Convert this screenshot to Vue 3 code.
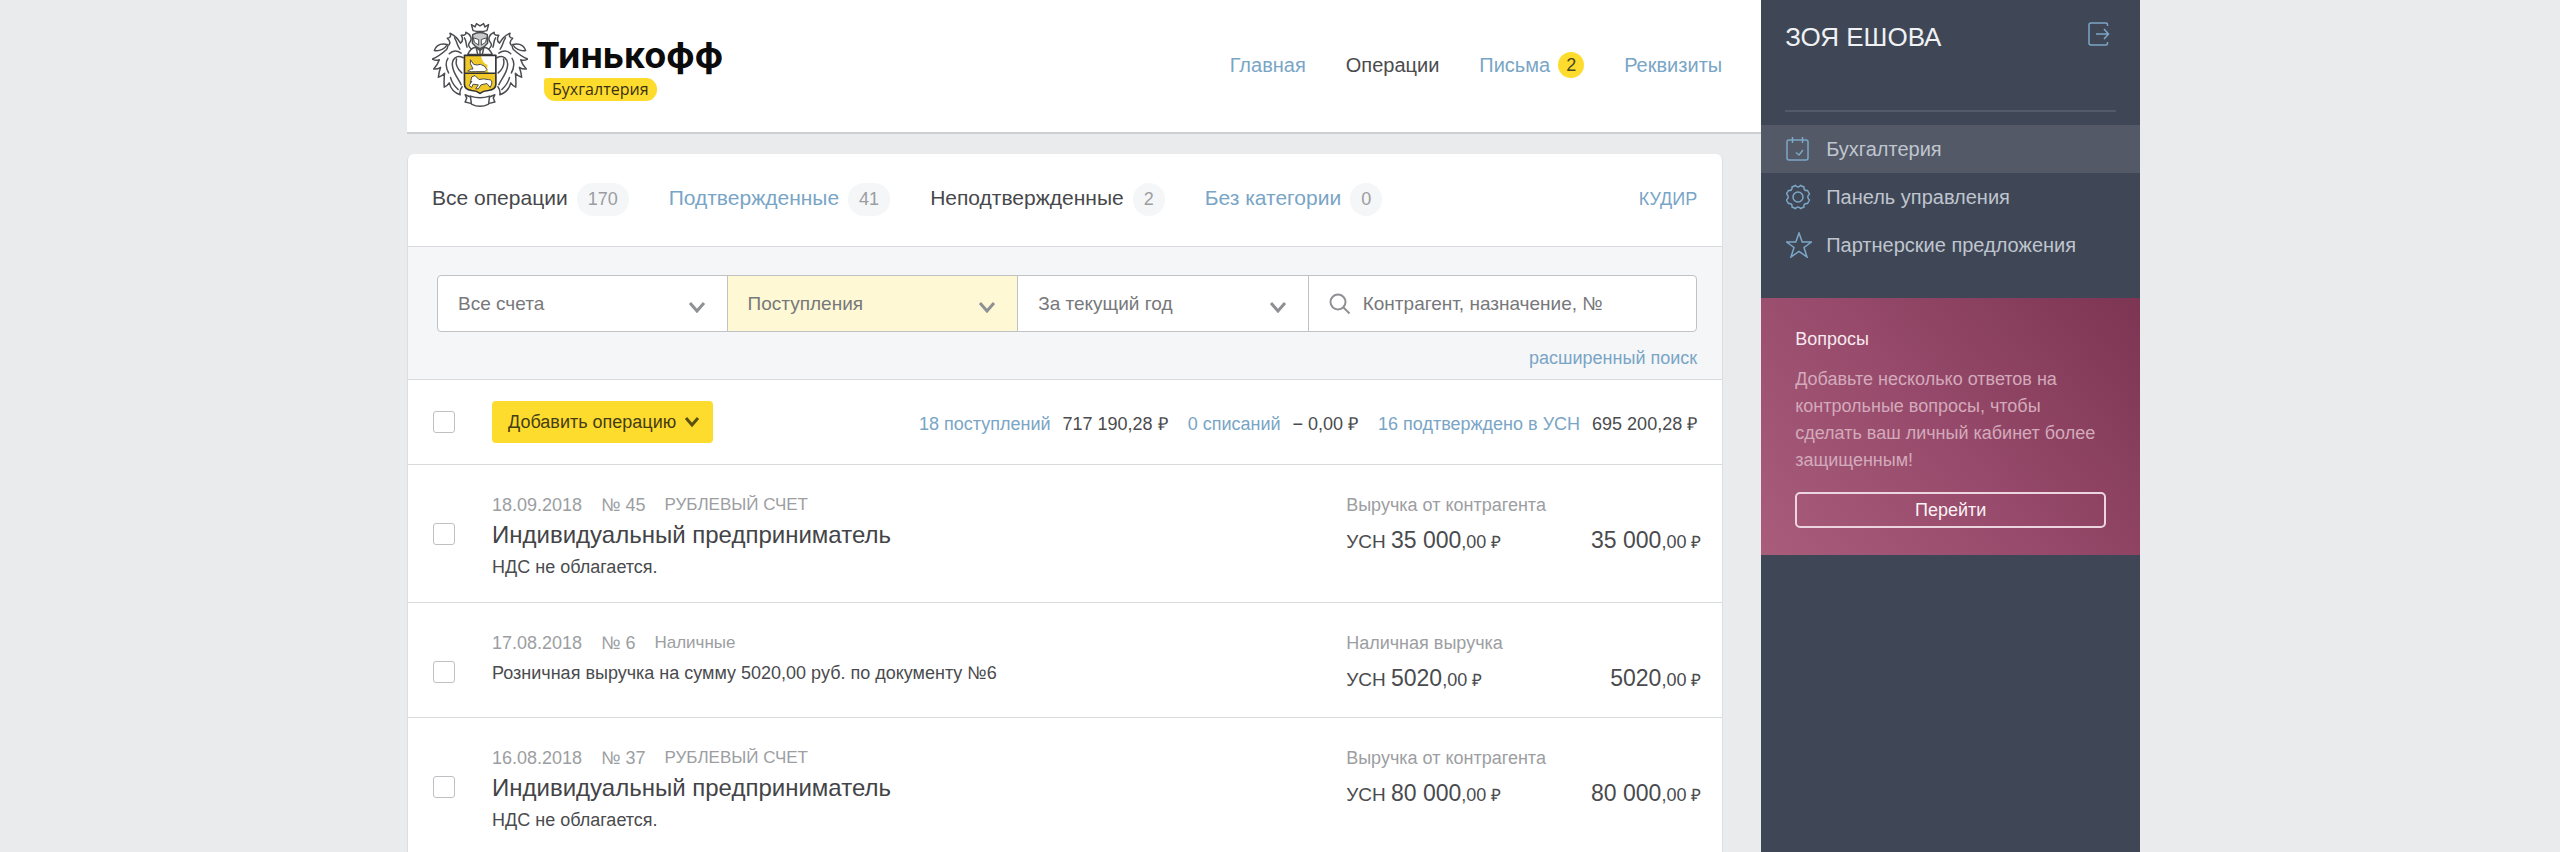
<script setup>
import { ref } from 'vue'

const nav = [
  { title: 'Главная' },
  { title: 'Операции', current: true },
  { title: 'Письма', count: 2 },
  { title: 'Реквизиты' }
]

const tabs = [
  { title: 'Все операции', count: 170, dark: true },
  { title: 'Подтвержденные', count: 41 },
  { title: 'Неподтвержденные', count: 2, dark: true },
  { title: 'Без категории', count: 0 }
]

const filters = [
  { id: 'account', label: 'Счет', value: 'Все счета' },
  { id: 'kind', label: 'Тип операции', value: 'Поступления', marked: true },
  { id: 'period', label: 'Период', value: 'За текущий год' }
]

const totals = [
  { title: '18 поступлений', sum: '717 190,28 ₽' },
  { title: '0 списаний', sum: '− 0,00 ₽' },
  { title: '16 подтверждено в УСН', sum: '695 200,28 ₽' }
]

const operations = ref([
  { date: '18.09.2018', number: '№ 45', account: 'РУБЛЕВЫЙ СЧЕТ', title: 'Индивидуальный предприниматель', note: 'НДС не облагается.', category: 'Выручка от контрагента', sum: '35 000', checked: false },
  { date: '17.08.2018', number: '№ 6', account: 'Наличные', title: '', note: 'Розничная выручка на сумму 5020,00 руб. по документу №6', category: 'Наличная выручка', sum: '5020', checked: false },
  { date: '16.08.2018', number: '№ 37', account: 'РУБЛЕВЫЙ СЧЕТ', title: 'Индивидуальный предприниматель', note: 'НДС не облагается.', category: 'Выручка от контрагента', sum: '80 000', checked: false }
])

const allChecked = ref(false)
const query = ref('')
</script>

<template>
  <div class="page">
    <div class="workspace">
      <header class="header">
        <a class="brand" href="#">
          <svg class="crest" viewBox="36 36 290 260" fill="none" stroke="#4c4d51" stroke-width="4.5" stroke-linejoin="round" stroke-linecap="round" aria-hidden="true">
            <g id="mantle">
              <path d="M158 120C146 112 144 104 150 97C158 88 154 74 138 67C140 75 132 77 124 76C130 86 130 94 122 100C114 86 104 76 90 70C95 80 90 84 82 85C90 92 92 98 88 104C80 106 86 112 80 119C68 130 56 140 37 148C44 152 52 153 58 150C54 162 48 171 41 178C49 179 56 177 62 173C58 184 56 194 55 203C63 201 69 197 74 191C72 206 72 220 73 233C80 230 84 226 88 220C92 236 102 250 121 256C119 246 122 238 127 232" />
              <path d="M43 122C48 108 62 100 82 104C76 116 60 125 43 122Z" />
              <path d="M130 144C110 134 94 148 98 170C101 194 116 206 124 226M88 132C98 122 112 122 124 130M104 84C112 96 112 108 120 118M134 84C140 92 138 102 142 112M84 146C76 158 78 174 86 190M92 204C96 220 104 230 115 240M110 148C106 164 112 178 126 190" />
            </g>
            <use href="#mantle" transform="matrix(-1 0 0 1 362 0)" />
            <path fill="#fff" d="M160 62L155 44L166 51L170 41L181 48L192 41L196 51L207 44L202 62Q181 68 160 62Z" />
            <path fill="#c9cacc" d="M159 74Q181 62 203 74L204 100Q196 112 181 117Q166 112 158 100Z" />
            <path fill="#fff" stroke-width="3" d="M162 84L177 89V106L165 98ZM200 84L185 89V106L197 98Z" />
            <path fill="#fff" d="M144 134Q154 112 168 113L181 122L194 113Q208 112 218 134Z" />
            <path d="M170 116L174 134M192 116L188 134M181 122V134" />
            <path fill="#f0c928" stroke="none" d="M134 137H229V224Q229 240 206 243Q190 244 181 252Q172 244 156 243Q134 240 134 224Z" />
            <path fill="#fff" stroke="none" d="M184 138H229V190H208Q200 180 204 166Q188 160 184 138Z" />
            <path fill="#fff" stroke-width="3" d="M145 184Q150 176 160 178L152 162V150L162 164Q172 168 182 164Q196 166 202 180L196 186H168Q156 188 145 184Z" />
            <path fill="#fff" stroke-width="3" d="M152 218L156 202L166 198L178 210Q192 206 206 210Q220 210 216 224L212 234L202 222L184 226L176 238L168 238L176 226L160 224L156 234L148 228L156 216Z" />
            <path stroke="#333" stroke-width="5" d="M134 137H229V224Q229 240 206 243Q190 244 181 252Q172 244 156 243Q134 240 134 224ZM134 191H229" />
            <path fill="#fff" d="M152 260Q181 270 210 260L207 284Q181 298 155 284ZM151 262L136 256L141 266L136 278L153 282M211 262L226 256L221 266L226 278L209 282" />
          </svg>
          <span class="brand-text">
            <span class="brand-name">Тинькофф</span>
            <span class="brand-product">Бухгалтерия</span>
          </span>
        </a>
        <nav class="nav" aria-label="Разделы">
          <a v-for="item in nav" :key="item.title" href="#" :class="{ current: item.current }">
            {{ item.title }}<span v-if="item.count" class="nav-count">{{ item.count }}</span>
          </a>
        </nav>
      </header>

      <main class="card">
        <div class="tabs">
          <a v-for="tab in tabs" :key="tab.title" href="#" class="tab" :class="{ dark: tab.dark }">
            <span class="tab-title">{{ tab.title }}</span><span class="tab-count">{{ tab.count }}</span>
          </a>
          <a href="#" class="ledger">КУДИР</a>
        </div>

        <form class="filters" @submit.prevent>
          <div class="fields">
            <div v-for="filter in filters" :key="filter.id" class="field" :class="{ marked: filter.marked }">
              <select :id="filter.id" :aria-label="filter.label">
                <option>{{ filter.value }}</option>
              </select>
              <svg class="chevron" viewBox="0 0 18 12" aria-hidden="true"><path d="M2 2L9 10L16 2" /></svg>
            </div>
            <label class="field search">
              <svg viewBox="0 0 22 22" aria-hidden="true"><circle cx="9" cy="9" r="7.5" /><path d="M14.5 14.5L20.5 20.5" /></svg>
              <input v-model="query" type="text" placeholder="Контрагент, назначение, №" aria-label="Поиск" />
            </label>
          </div>
          <a href="#" class="advanced">расширенный поиск</a>
        </form>

        <div class="toolbar">
          <input v-model="allChecked" type="checkbox" class="check" aria-label="Выбрать все операции" />
          <button type="button" class="add">
            Добавить операцию
            <svg viewBox="0 0 16 10" aria-hidden="true"><path d="M2 1L8 8L14 1" /></svg>
          </button>
          <div class="totals">
            <span v-for="total in totals" :key="total.title" class="total">
              <a href="#">{{ total.title }}</a><span>{{ total.sum }}</span>
            </span>
          </div>
        </div>

        <article v-for="op in operations" :key="op.date" class="operation">
          <input v-model="op.checked" type="checkbox" class="check" :aria-label="'Выбрать операцию ' + op.number" />
          <div class="summary">
            <div class="meta"><span>{{ op.date }}</span><span>{{ op.number }}</span><span class="account">{{ op.account }}</span></div>
            <h2 v-if="op.title">{{ op.title }}</h2>
            <p class="note" :class="{ lone: !op.title }">{{ op.note }}</p>
          </div>
          <div class="figures">
            <div class="category">{{ op.category }}</div>
            <div class="amounts">
              <span><span class="tax">УСН </span>{{ op.sum }}<span class="cents">,00</span><span class="ruble"> ₽</span></span>
              <span>{{ op.sum }}<span class="cents">,00</span><span class="ruble"> ₽</span></span>
            </div>
          </div>
        </article>
      </main>
    </div>

    <aside class="sidebar">
      <div class="user">
        <span>ЗОЯ ЕШОВА</span>
        <button type="button" class="logout" aria-label="Выйти">
          <svg viewBox="0 0 22 24" aria-hidden="true"><path d="M19.500 4V2.500Q19.500 1 18 1H3Q1 1 1 3V21Q1 23 3 23H18Q19.500 23 19.500 21.500V20M8 12H20.500M16 7L20.500 12L16 17" /></svg>
        </button>
      </div>
      <nav class="menu" aria-label="Продукты">
        <a href="#" class="active">
          <svg viewBox="0 0 26 26" aria-hidden="true"><rect x="1" y="4" width="21" height="20" rx="2" /><path d="M6.500 1V7M16.500 1V7M10 16.500L13 19L17 14" /></svg>
          Бухгалтерия
        </a>
        <a href="#">
          <svg viewBox="0 0 26 26" aria-hidden="true"><circle cx="12" cy="13" r="5" /><path d="M9.500 1.500Q12 4.500 14.500 1.500L18 3Q17.500 7 21.500 6.500L23.500 10Q20 13 23.500 16L21.500 19.500Q17.500 19 18 23L14.500 24.500Q12 21.500 9.500 24.500L6 23Q6.500 19 2.500 19.500L.5 16Q4 13 .5 10L2.500 6.500Q6.500 7 6 3Z" /></svg>
          Панель управления
        </a>
        <a href="#">
          <svg viewBox="0 0 26 26" aria-hidden="true"><path d="M13 1L16.200 10H25.500L18 15.500L21 25L13 19.300L5 25L8 15.500L.5 10H9.800Z" /></svg>
          Партнерские предложения
        </a>
      </nav>
      <section class="promo">
        <h3>Вопросы</h3>
        <p>Добавьте несколько ответов на контрольные вопросы, чтобы сделать ваш личный кабинет более защищенным!</p>
        <button type="button">Перейти</button>
      </section>
    </aside>
  </div>
</template>

<style>
body {
  margin: 0;
  background: #eaebed;
}
</style>

<style scoped>
.page {
  display: grid;
  grid-template-columns: minmax(0, 1fr) 379px;
  min-height: 100vh;
  padding-left: 15.9%;
  padding-right: 16.4%;
  box-sizing: border-box;
  font-family: "Liberation Sans", Arial, sans-serif;
  font-size: 18px;
  line-height: 24px;
  color: #4a4b4e;
  background: #eaebed;
}
.page * { box-sizing: border-box; }
a { color: #79a5c6; text-decoration: none; }
button, input, select { font: inherit; color: inherit; }
button { cursor: pointer; }
h2, h3, p { margin: 0; font-weight: 400; }

.workspace { display: flex; flex-direction: column; }

.header {
  display: flex;
  justify-content: space-between;
  align-items: center;
  height: 134px;
  padding: 0 39px 2px 25px;
  background: #fff;
  border-bottom: 2px solid #cdced1;
}
.brand { display: flex; align-items: center; gap: 8px; color: #0b0b0c; }
.crest { width: 96px; height: 86px; }
.brand-text { display: flex; flex-direction: column; align-items: flex-start; padding-top: 3px; }
.brand-name { font: 700 36px/46px Inter, sans-serif; }
.brand-product {
  margin-left: 8px;
  padding: 0 8px;
  border-radius: 3px 11px 11px 11px;
  background: #fedc2e;
  font: 16px/23px "Open Sans", sans-serif;
  color: #3a3010;
}
.nav { display: flex; gap: 40px; font-size: 20px; }
.nav a { display: flex; align-items: center; gap: 8px; }
.nav .current { color: #4a4b4e; }
.nav-count {
  width: 26px;
  border-radius: 13px;
  background: #fedc2e;
  font-size: 18px;
  line-height: 26px;
  text-align: center;
  color: #4a4520;
}

.card {
  flex: 1;
  margin: 20px 38px 0 0;
  background: #fff;
  border: 1px solid #dcdee1;
  border-width: 0 1px;
  border-radius: 6px 6px 0 0;
}
.tabs {
  display: flex;
  align-items: center;
  gap: 40px;
  height: 93px;
  padding: 0 25px 2px 24px;
  border-bottom: 1px solid #d8dade;
  font-size: 21px;
}
.tab { display: flex; align-items: center; gap: 9px; }
.tab-title { padding-bottom: 2px; }
.tab.dark { color: #47484b; }
.tab-count {
  padding: 0 11px;
  border-radius: 16px;
  background: #f5f6f8;
  font-size: 18px;
  line-height: 33px;
  color: #9b9da1;
}
.ledger { margin-left: auto; font-size: 18px; }

.filters {
  padding: 28px 25px 9px 29px;
  background: #f5f6f8;
  border-bottom: 1px solid #d8dade;
}
.fields {
  display: grid;
  grid-template-columns: 290fr 291fr 291fr 388fr;
  height: 57px;
  border: 1px solid #c0c2c6;
  border-radius: 4px;
  background: #fff;
  overflow: hidden;
  font-size: 19px;
  color: #77787b;
}
.field { display: grid; align-items: center; border-right: 1px solid #c0c2c6; }
.field select, .chevron { grid-area: 1 / 1; }
.field select {
  width: 100%;
  height: 100%;
  padding: 0 50px 0 20px;
  border: 0;
  appearance: none;
  background: transparent;
}
.marked { background: #fef8d5; }
.chevron { width: 18px; height: 12px; margin: 6px 21px 0; justify-self: end; pointer-events: none; }
.chevron path { fill: none; stroke: #8f9094; stroke-width: 3; }
.search { grid-template-columns: 22px 1fr; gap: 12px; padding: 0 20px; border-right: 0; }
.search svg { width: 22px; height: 22px; fill: none; stroke: #8f9094; stroke-width: 2; }
.search input { width: 100%; padding: 0; border: 0; outline: 0; background: none; }
.search input::placeholder { color: #77787b; opacity: 1; }
.advanced { display: block; margin-top: 14px; text-align: right; }

.toolbar {
  display: flex;
  align-items: center;
  height: 85px;
  padding: 0 25px;
  border-bottom: 1px solid #d8dade;
}
.check {
  flex: none;
  width: 22px;
  height: 22px;
  margin: 0 37px 0 0;
  appearance: none;
  background: #fff;
  border: 1px solid #bfc0c4;
  border-radius: 3px;
}
.check:checked { background: #fedc2e; }
.add {
  display: flex;
  align-items: center;
  gap: 8px;
  height: 42px;
  padding: 0 13px 0 16px;
  border: 0;
  border-radius: 4px;
  background: #fedc2e;
  color: #453d14;
}
.add svg { width: 16px; height: 10px; fill: none; stroke: #5c5113; stroke-width: 3; }
.totals { display: flex; gap: 20px; margin-left: auto; padding-top: 4px; }
.total { display: flex; gap: 12px; }

.operation {
  display: flex;
  align-items: flex-start;
  padding: 28px 21px 16px 25px;
  border-bottom: 1px solid #d8dade;
}
.operation:last-child { padding-bottom: 8px; border-bottom: 0; }
.operation .check { margin-top: 30px; }
.summary { flex: 1; padding-bottom: 5px; }
.meta { display: flex; gap: 19px; color: #9c9ea2; }
.account { font-size: 17px; }
.summary h2 { font-size: 24px; line-height: 36px; color: #434447; }
.note { line-height: 28px; }
.lone { padding-top: 4px; }
.figures { width: 355px; }
.category { color: #9c9ea2; }
.amounts { display: flex; justify-content: space-between; font-size: 23px; line-height: 46px; }
.amounts span span { line-height: 1; }
.tax { font-size: 19px; }
.cents { font-size: 18px; }
.ruble { font-size: 17px; }

.sidebar { background: #3f4756; }
.user {
  display: flex;
  justify-content: space-between;
  height: 112px;
  margin: 0 24px;
  padding-top: 22px;
  border-bottom: 2px solid #535b69;
  font-size: 26px;
  line-height: 30px;
  color: #eff1f5;
}
.logout { width: 22px; height: 24px; margin-right: 6px; padding: 0; border: 0; background: none; }
.logout svg, .menu svg { display: block; fill: none; stroke: #7da7c7; stroke-width: 1.5; }
.logout svg { width: 22px; height: 24px; }
.menu { margin-top: 13px; }
.menu a {
  display: flex;
  align-items: center;
  gap: 14px;
  height: 48px;
  padding-left: 25px;
  font-size: 20px;
  color: #bfc5cf;
}
.menu .active { background: #535966; }
.menu svg { width: 26px; height: 26px; }
.promo {
  margin-top: 29px;
  padding: 28px 34px 27px;
  background: linear-gradient(50deg, #a95d7b, #96496a 50%, #7c3552);
}
.promo h3 { font-size: 18px; line-height: 27px; color: #f7e9ef; }
.promo p { margin: 13px 0; line-height: 27px; color: #d3aabb; }
.promo button {
  width: 100%;
  height: 36px;
  margin-top: 5px;
  padding: 0;
  border: 2px solid #ecd5de;
  border-radius: 5px;
  background: none;
  color: #fbf2f5;
}
</style>
